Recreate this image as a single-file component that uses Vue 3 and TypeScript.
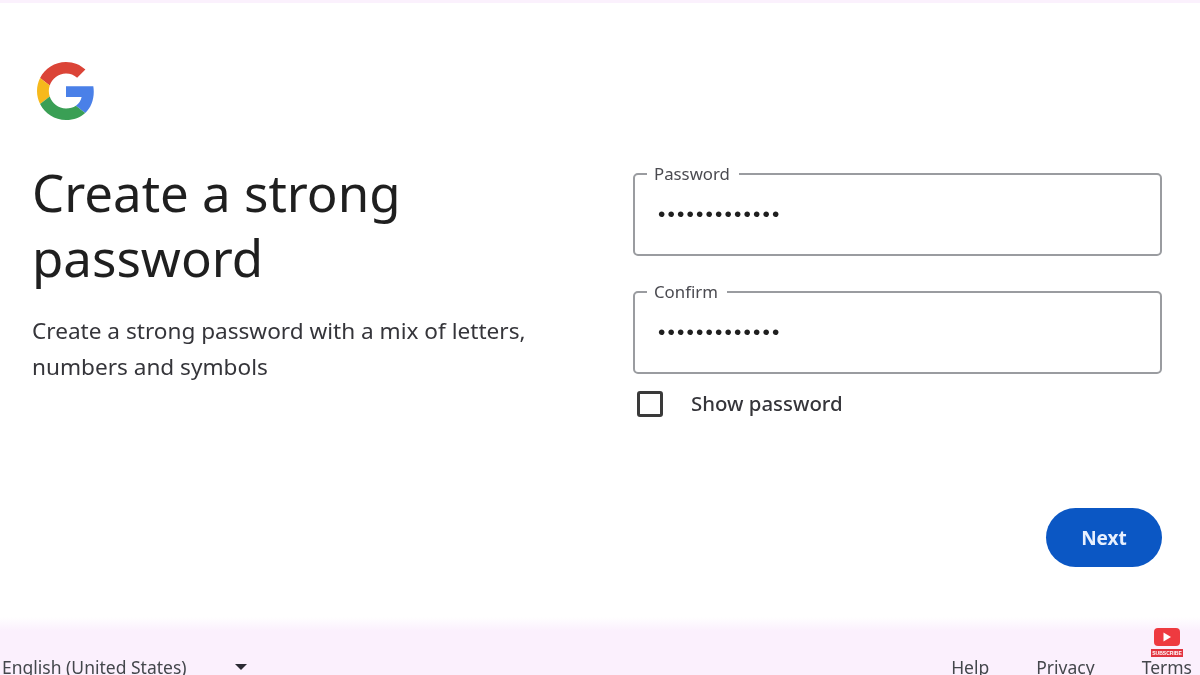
<script setup lang="ts">
const dots = '•••••••••••••'
const fields = [
  { label: 'Password', value: dots },
  { label: 'Confirm', value: dots },
]
const links = ['Help', 'Privacy', 'Terms']
</script>

<template>
  <div class="page">
    <main class="main">
      <section class="left">
        <svg class="logo" viewBox="0 0 48 48" aria-label="Google logo">
          <path fill="#DB4437" d="M24 9.5c3.54 0 6.71 1.22 9.21 3.6l6.85-6.85C35.9 2.38 30.47 0 24 0 14.62 0 6.51 5.38 2.56 13.22l7.98 6.19C12.43 13.72 17.74 9.5 24 9.5z"/>
          <path fill="#4A80E8" d="M46.98 24.55c0-1.57-.15-3.09-.38-4.55H24v9.02h12.94c-.58 2.96-2.26 5.48-4.78 7.18l7.73 6c4.51-4.18 7.09-10.36 7.09-17.65z"/>
          <path fill="#F6B91C" d="M10.53 28.59c-.48-1.45-.76-2.99-.76-4.59s.27-3.14.76-4.59l-7.98-6.19C.92 16.46 0 20.12 0 24c0 3.88.92 7.54 2.56 10.78l7.97-6.19z"/>
          <path fill="#3A9F55" d="M24 48c6.48 0 11.93-2.13 15.89-5.81l-7.73-6c-2.15 1.45-4.92 2.3-8.16 2.3-6.26 0-11.57-4.22-13.47-9.91l-7.98 6.19C6.51 42.62 14.62 48 24 48z"/>
        </svg>
        <h1 class="title">Create a strong<br />password</h1>
        <p class="desc">Create a strong password with a mix of letters,<br />numbers and symbols</p>
      </section>
      <section class="right">
        <div class="form">
          <fieldset v-for="f in fields" :key="f.label" class="field">
            <legend class="legend">{{ f.label }}</legend>
            <div class="dots">{{ f.value }}</div>
          </fieldset>
          <label class="show">
            <span class="box"></span>
            <span class="show-text">Show password</span>
          </label>
        </div>
        <div class="actions">
          <button class="next" type="button">Next</button>
        </div>
      </section>
    </main>
    <footer class="footer">
      <div class="lang">
        <span>English (United States)</span>
        <svg class="caret" viewBox="0 0 12 6"><path d="M0 0h12L6 6z" fill="#2b2b33" /></svg>
      </div>
      <nav class="links">
        <a v-for="l in links" :key="l" class="link">{{ l }}</a>
      </nav>
      <div class="yt">
        <div class="yt-btn">
          <svg viewBox="0 0 10 10" class="yt-play"><path d="M1.5 0.5L9 5 1.5 9.5z" fill="#fff" /></svg>
        </div>
        <div class="yt-label">SUBSCRIBE</div>
      </div>
    </footer>
  </div>
</template>

<style>
html, body { margin: 0; background: #fff; }
</style>

<style scoped>
.page {
  width: 1200px;
  height: 675px;
  overflow: hidden;
  display: flex;
  flex-direction: column;
  border-top: 3px solid #fbf1fd;
  box-sizing: border-box;
  background: #fff;
  font-family: "Noto Sans", "Open Sans", sans-serif;
  color: #1f1f1f;
  filter: blur(0.4px);
}
.main {
  flex: 1;
  display: flex;
  justify-content: space-between;
  padding: 0 38px 0 32px;
  min-height: 0;
}
.left { width: 560px; padding-top: 59px; }
.logo { display: block; width: 58px; height: 58px; margin-left: 5px; }
.title {
  margin: 40px 0 0;
  font-weight: 400;
  font-size: 51px;
  line-height: 65px;
  color: #1f1f1f;
}
.desc {
  margin: 23px 0 0;
  font-size: 22.6px;
  line-height: 36px;
  color: #35353a;
}
.right {
  width: 529px;
  display: flex;
  flex-direction: column;
  justify-content: space-between;
  padding: 161px 0 50px;
  box-sizing: border-box;
}
.form { display: flex; flex-direction: column; }
.field {
  margin: 0 0 26px;
  padding: 0 23px;
  height: 92px;
  box-sizing: border-box;
  border: 2px solid #9a9ca0;
  border-radius: 5px;
  min-width: 0;
}
.field:nth-child(2) { margin-bottom: 0; }
.legend {
  padding: 0 9px 0 7px;
  margin-left: -11px;
  font-size: 16.8px;
  line-height: 20px;
  color: #4a4a50;
}
.dots {
  margin-top: 20px;
  font-family: "Liberation Sans", sans-serif;
  font-size: 21px;
  line-height: 20px;
  letter-spacing: 2.15px;
  color: #1f1f1f;
}
.show { display: flex; align-items: center; margin-top: 16px; margin-left: 4px; }
.box {
  width: 26px;
  height: 26px;
  box-sizing: border-box;
  border: 3px solid #3a3a3a;
  border-radius: 3px;
}
.show-text {
  margin-left: 28px;
  font-size: 20.4px;
  font-weight: 500;
  line-height: 27px;
  color: #35353a;
}
.actions { display: flex; justify-content: flex-end; }
.next {
  width: 116px;
  height: 59px;
  border: 0;
  border-radius: 30px;
  background: #0b57c4;
  color: #e8f0fe;
  font-family: "Noto Sans", sans-serif;
  font-size: 19px;
  font-weight: 700;
  padding-bottom: 1px;
}
.footer {
  height: 58px;
  flex: none;
  position: relative;
  background: linear-gradient(#fff 0, #fbf0fd 14px);
  display: flex;
  justify-content: space-between;
  align-items: flex-end;
  font-size: 17.5px;
  color: #44474c;
}
.lang { display: flex; align-items: center; padding-left: 2px; height: 24px; margin-bottom: -4px; }
.caret { width: 12px; height: 6px; margin-left: 48px; }
.links { display: flex; gap: 47px; padding-right: 8px; height: 24px; margin-bottom: -4px; }
.yt {
  position: absolute;
  right: 17px;
  top: 11px;
  width: 32px;
  display: flex;
  flex-direction: column;
  align-items: center;
}
.yt-btn {
  width: 26px;
  height: 18px;
  border-radius: 4px;
  background: #ee3a40;
  display: flex;
  align-items: center;
  justify-content: center;
}
.yt-play { width: 10px; height: 10px; }
.yt-label {
  margin-top: 3px;
  width: 32px;
  height: 8px;
  background: #e2343f;
  color: #fff;
  font-family: "Liberation Sans", sans-serif;
  font-size: 5px;
  font-weight: 700;
  line-height: 8px;
  text-align: center;
}
</style>
